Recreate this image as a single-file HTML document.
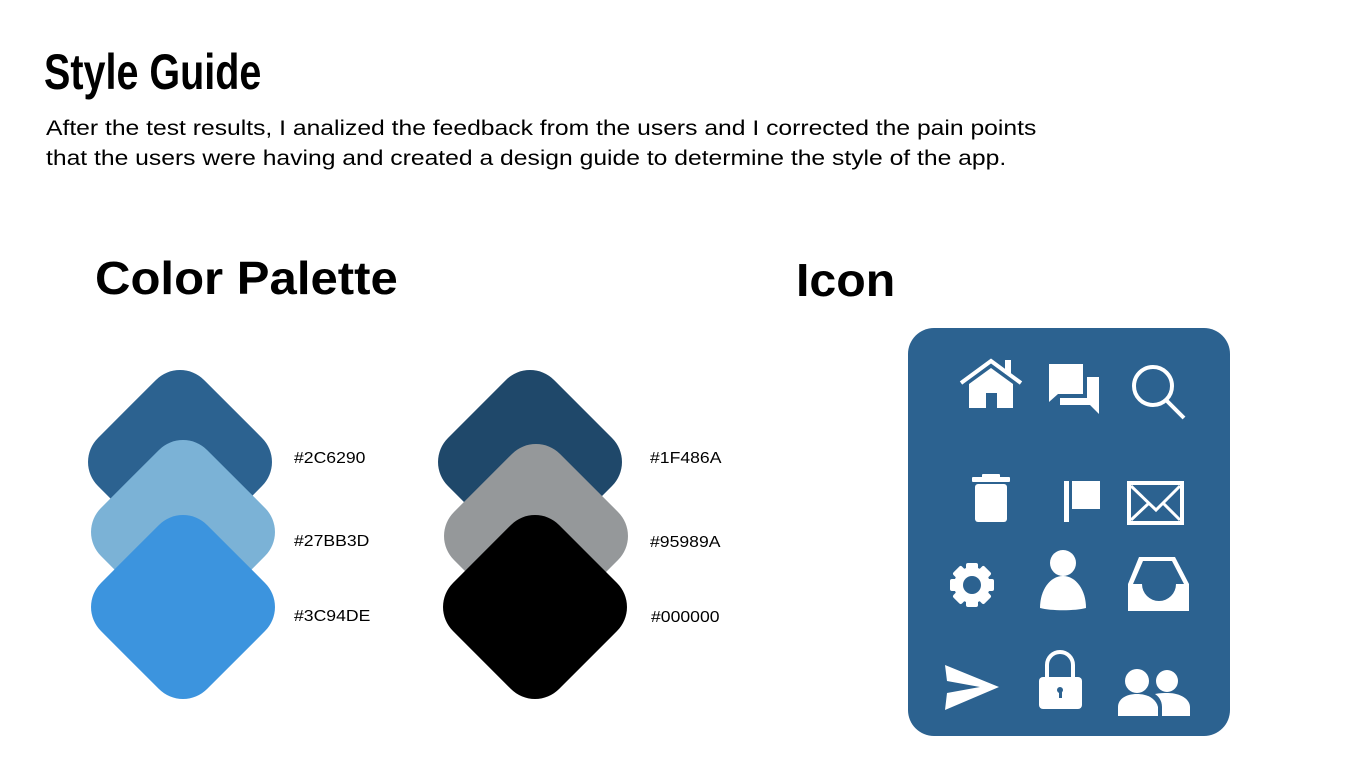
<!DOCTYPE html>
<html><head><meta charset="utf-8"><style>
body{margin:0;width:1366px;height:768px;background:#fff;position:relative;overflow:hidden;font-family:"Liberation Sans",sans-serif;color:#000}
.t{position:absolute;white-space:nowrap;transform-origin:0 0}
.d{position:absolute;width:150px;height:150px;border-radius:34px;transform:rotate(45deg)}
.lab{position:absolute;font-size:16px;white-space:nowrap;transform:scaleX(1.1);transform-origin:0 0}
</style></head><body>
<div class="t" style="left:44px;top:42px;font-weight:bold;font-size:50px;line-height:60px;transform:scaleX(0.79)">Style Guide</div>
<div class="t" style="left:46px;top:114px;font-size:21px;line-height:30px;transform:scaleX(1.175)">After the test results, I analized the feedback from the users and I corrected the pain points<br>that the users were having and created a design guide to determine the style of the app.</div>
<div class="t" style="left:95px;top:250px;font-weight:bold;font-size:46px;line-height:56px;transform:scaleX(1.067)">Color Palette</div>
<div class="t" style="left:796px;top:252px;font-weight:bold;font-size:46px;line-height:56px;transform:scaleX(1.05)">Icon</div>

<div class="d" style="left:105px;top:387px;background:#2C6290"></div>
<div class="d" style="left:108px;top:457px;background:#7BB2D6"></div>
<div class="d" style="left:108px;top:532px;background:#3C94DE"></div>
<div class="d" style="left:455px;top:387px;background:#1F486A"></div>
<div class="d" style="left:461px;top:461px;background:#95989A"></div>
<div class="d" style="left:460px;top:532px;background:#000"></div>

<div class="lab" style="left:294px;top:450px">#2C6290</div>
<div class="lab" style="left:294px;top:533px">#27BB3D</div>
<div class="lab" style="left:294px;top:608px">#3C94DE</div>
<div class="lab" style="left:650px;top:450px">#1F486A</div>
<div class="lab" style="left:650px;top:534px">#95989A</div>
<div class="lab" style="left:651px;top:609px">#000000</div>

<svg style="position:absolute;left:0;top:0" width="1366" height="768">
<rect x="908" y="328" width="322" height="408" rx="26" fill="#2C6290"/>
<g fill="#fff">
<path d="M961 383 L991 361 L1021 383" fill="none" stroke="#fff" stroke-width="4" stroke-linejoin="miter"/>
<rect x="1005" y="360" width="6" height="14"/>
<path d="M969 384 L991 368 L1013 384 L1013 408 L997 408 L997 393 L986 393 L986 408 L969 408 Z"/>
<path d="M1049 364 L1083 364 L1083 394 L1058 394 L1049 402 Z"/>
<path d="M1087 377 L1099 377 L1099 414 L1090 405 L1060 405 L1060 398 L1087 398 Z"/>
<circle cx="1153" cy="386" r="19" fill="none" stroke="#fff" stroke-width="4"/>
<path d="M1166 400 L1184 418" stroke="#fff" stroke-width="4"/>
<rect x="972" y="477" width="38" height="5" rx="1"/>
<rect x="982" y="474" width="18" height="4" rx="1"/>
<rect x="975" y="484" width="32" height="38" rx="3"/>
<rect x="1064" y="481" width="5" height="41"/>
<rect x="1072" y="481" width="28" height="28"/>
<rect x="1129" y="483" width="53" height="40" fill="none" stroke="#fff" stroke-width="4"/>
<path d="M1131 486 L1156 510 L1180 486 M1131 520 L1149 503 M1180 520 L1163 503" fill="none" stroke="#fff" stroke-width="3"/>
<g transform="translate(972 585)">
<circle r="18"/>
<g><rect x="-6" y="-22" width="12" height="10" rx="2"/><rect x="-6" y="12" width="12" height="10" rx="2"/><rect x="-22" y="-6" width="10" height="12" rx="2"/><rect x="12" y="-6" width="10" height="12" rx="2"/></g>
<g transform="rotate(45)"><rect x="-6" y="-22" width="12" height="10" rx="2"/><rect x="-6" y="12" width="12" height="10" rx="2"/><rect x="-22" y="-6" width="10" height="12" rx="2"/><rect x="12" y="-6" width="10" height="12" rx="2"/></g>
<circle r="9" fill="#2C6290"/>
</g>
<circle cx="1063" cy="563" r="13"/>
<path d="M1040 608 C1040 590 1050 576 1063 576 C1076 576 1086 590 1086 608 C1075 611 1051 611 1040 608 Z"/>
<path d="M1139 557 L1175 557 L1189 584 L1189 611 L1128 611 L1128 584 Z M1143 561 L1133 584 L1142 584 A17 17 0 0 0 1176 584 L1184 584 L1172 561 Z" fill-rule="evenodd"/>
<path d="M945 665 L999 687 L945 710 L947 693 L980 687 L947 681 Z"/>
<path d="M1047 677 L1047 665 A13 13 0 0 1 1073 665 L1073 677" fill="none" stroke="#fff" stroke-width="4"/>
<rect x="1039" y="677" width="43" height="32" rx="4"/>
<circle cx="1060" cy="690" r="3" fill="#2C6290"/><rect x="1059" y="690" width="3" height="8" fill="#2C6290"/>
<circle cx="1137" cy="681" r="12"/><circle cx="1167" cy="681" r="11"/>
<path d="M1118 716 L1118 707 C1118 699 1126 694 1137 694 C1148 694 1156 699 1158 707 L1158 716 Z"/>
<path d="M1162 716 L1162 707 C1162 700 1158 696 1155 694 C1160 693 1164 693 1168 693 C1180 693 1190 699 1190 707 L1190 716 Z"/>
</g>
</svg>
</body></html>
